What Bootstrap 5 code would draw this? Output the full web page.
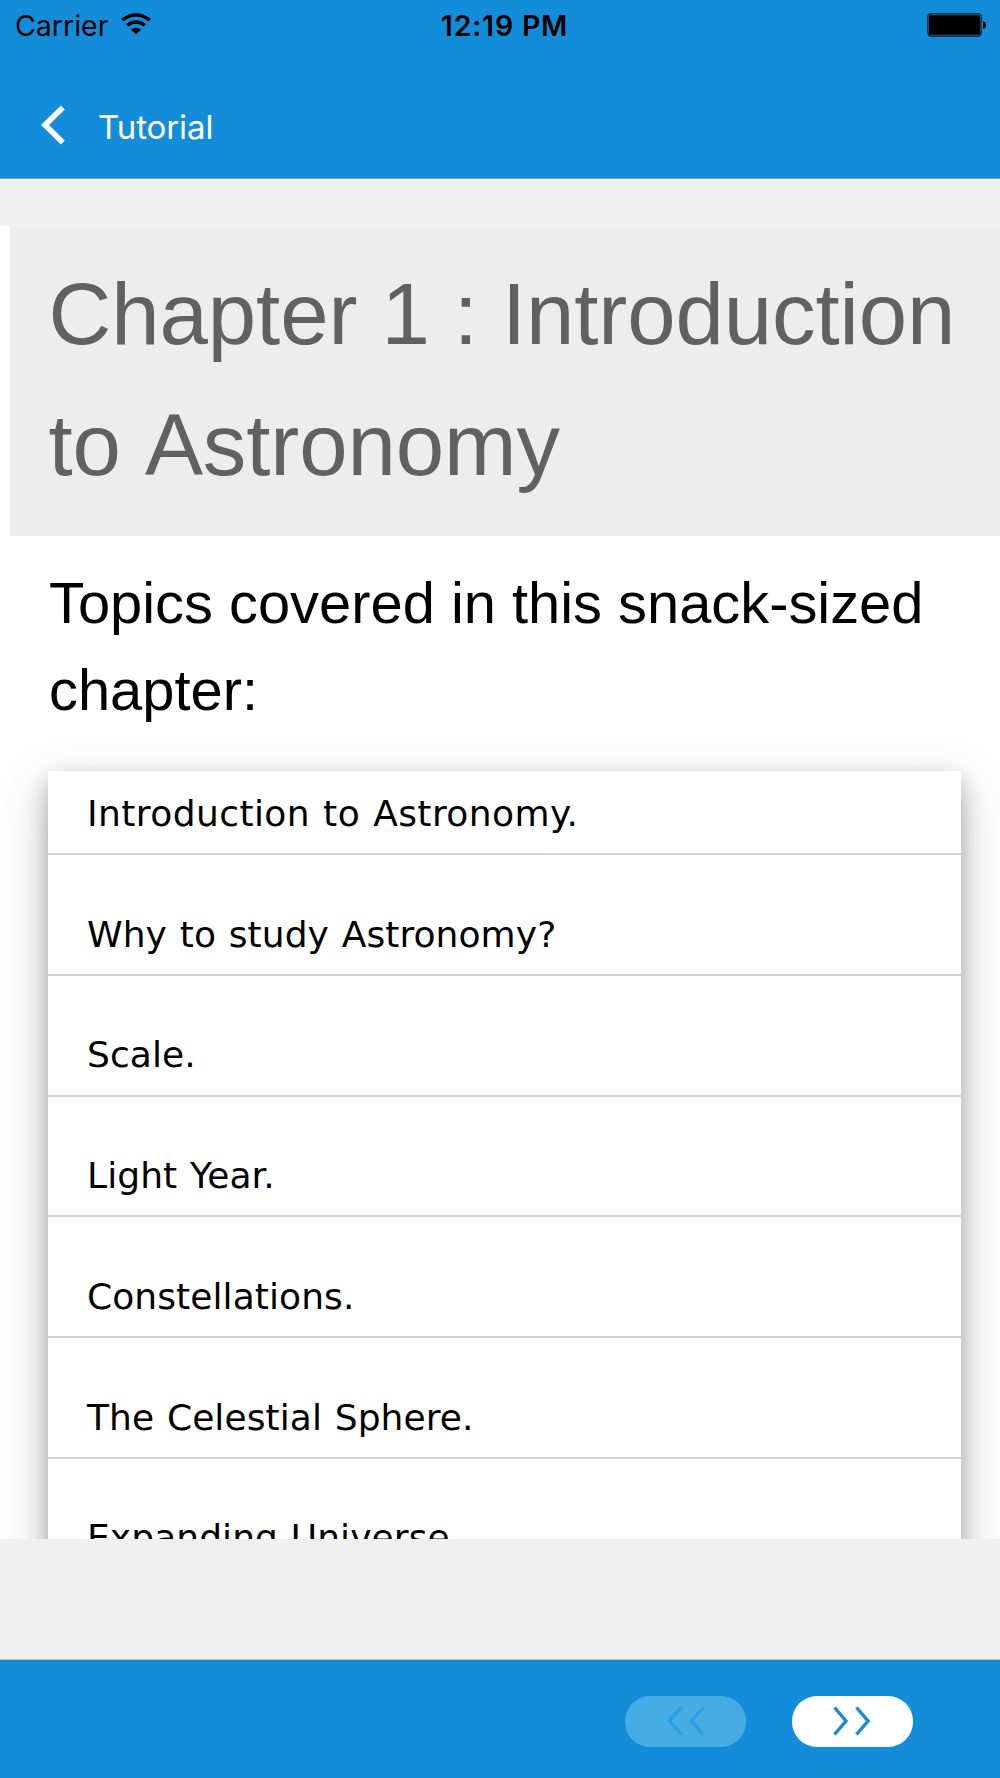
<!DOCTYPE html>
<html lang="en">
<head>
<meta charset="utf-8">
<meta name="viewport" content="width=device-width, initial-scale=1">
<title>Tutorial</title>
<link href="https://cdn.jsdelivr.net/npm/bootstrap@5.3.0/dist/css/bootstrap.min.css" rel="stylesheet">
<style>
  body { height: 1778px; background: #f0f0f0; font-family: Inter, "Liberation Sans", sans-serif; overflow: hidden; }
  svg { display: block; flex: none; }
  .app-header { height: 179px; background: #138dda; border-bottom: 1px solid #8e9aa6; }
  .status-bar { height: 48px; padding: 2px 14px 0 15px; font-size: 28.5px; line-height: 47px; color: #000; }
  .status-bar > div { flex: 1 1 0; }
  .status-bar .wifi { margin-left: 12.5px; margin-top: -3px; }
  .status-bar .battery { margin-top: -1px; }
  .status-time { font-weight: 600; white-space: nowrap; letter-spacing: .8px; margin-left: 8px; }
  .nav-row { height: 130px; padding: 24px 0 0 41px; gap: 32px; }
  .nav-title { color: #fff; font-size: 33px; font-weight: 400; line-height: 40px; padding-top: 4px; letter-spacing: -.1px; }
  .web-view { height: 1313px; margin-top: 47px; overflow: hidden; background: #fff; color: #000; font-family: "Liberation Sans", sans-serif; }
  .chapter-head { height: 310px; margin-left: 10px; padding: 22px 0 0 38.5px; background: #ededed; }
  .chapter-head h1 { font-size: 87px; line-height: 131px; font-weight: 400; color: #616161; letter-spacing: -.1px; font-kerning: none; }
  .topics-title { font-size: 57.85px; line-height: 87px; font-weight: 400; margin: 24px 0 37px 49px; }
  .topic-list { margin: 0 39px 0 48px; background: #fff; font-family: "DejaVu Sans", sans-serif; font-size: 36px; word-spacing: 1.2px; letter-spacing: .08px; box-shadow: 0 9.7px 19.3px rgba(0,0,0,.24), 0 14.5px 48.3px rgba(0,0,0,.22); }
  .topic-list .topic { height: 120.77px; padding: 0 39px 12.3px; line-height: 54px; border-bottom: 2.4px solid #d4d4d4; }
  .topic-list .topic:first-child { height: 84.2px; letter-spacing: .42px; }
  .bottom-bar { height: 119px; margin-top: 120px; padding: 4px 87px 0 0; gap: 46px; background: #138dda; border-top: 1px solid #b4c9d4; }
  .page-btn { width: 121px; height: 51px; border: 0; border-radius: 25px; background: #fff; color: #138dda; }
  .page-btn:disabled { background: #45ade3; color: #2b9fe1; opacity: 1; }
  .page-btn svg { margin-right: 2px; }
</style>
</head>
<body class="d-flex flex-column">
<header class="app-header flex-shrink-0">
  <div class="status-bar d-flex align-items-center">
    <div class="d-flex align-items-center"><span>Carrier</span>
      <svg class="wifi" width="30" height="22" viewBox="0 0 30 22"><g fill="none" stroke="#000" stroke-width="3.6"><path d="M1.2 7.2C9 .2 21 .2 28.8 7.2"/><path d="M6.2 12.4c5-4.6 12.6-4.6 17.6 0"/></g><path d="M10 16.5c3-2.5 7-2.5 10 0L15 21.5z"/></svg>
    </div>
    <span class="status-time">12:19 PM</span>
    <div class="d-flex justify-content-end"><svg class="battery" width="59" height="24" viewBox="0 0 59 24"><rect x=".7" y=".7" width="53.6" height="22.6" rx="3.5" fill="#0e5f95" stroke="#062a42" stroke-width="1.2"/><rect x="2" y="2.2" width="51" height="19.6" rx="1.5"/><path d="M56 8c4.2 1 4.2 7 0 8z"/></svg></div>
  </div>
  <div class="nav-row d-flex align-items-center">
    <svg width="25" height="40" viewBox="0 0 25 40"><path d="M21.8 2.5 4 20l17.8 17.5" fill="none" stroke="#fff" stroke-width="5.6"/></svg>
    <span class="nav-title">Tutorial</span>
  </div>
</header>
<main class="web-view flex-shrink-0">
  <div class="chapter-head"><h1 class="m-0">Chapter 1 : Introduction<br>to Astronomy</h1></div>
  <h2 class="topics-title">Topics covered in this snack-sized<br>chapter:</h2>
  <ul class="topic-list list-unstyled">
    <li class="topic d-flex align-items-end">Introduction to Astronomy.</li>
    <li class="topic d-flex align-items-end">Why to study Astronomy?</li>
    <li class="topic d-flex align-items-end">Scale.</li>
    <li class="topic d-flex align-items-end">Light Year.</li>
    <li class="topic d-flex align-items-end">Constellations.</li>
    <li class="topic d-flex align-items-end">The Celestial Sphere.</li>
    <li class="topic d-flex align-items-end">Expanding Universe.</li>
  </ul>
</main>
<footer class="bottom-bar flex-shrink-0 d-flex align-items-center justify-content-end">
  <button class="page-btn btn p-0 d-flex align-items-center justify-content-center" disabled aria-label="Previous"><svg width="38" height="30" viewBox="0 0 38 30"><path d="M15 1.5 3.5 15 15 28.5M37 1.5 25.5 15 37 28.5" fill="none" stroke="currentColor" stroke-width="3.4"/></svg></button>
  <button class="page-btn btn p-0 d-flex align-items-center justify-content-center" aria-label="Next"><svg width="38" height="30" viewBox="0 0 38 30"><path d="M1.5 1.5 13 15 1.5 28.5M23.5 1.5 35 15 23.5 28.5" fill="none" stroke="currentColor" stroke-width="3.4"/></svg></button>
</footer>
<script src="https://cdn.jsdelivr.net/npm/bootstrap@5.3.0/dist/js/bootstrap.bundle.min.js"></script>
</body>
</html>
